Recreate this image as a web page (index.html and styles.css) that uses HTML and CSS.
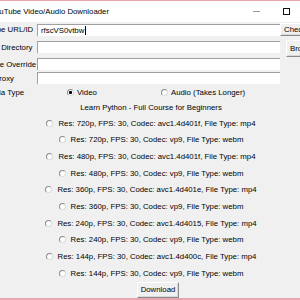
FILE: index.html
```html
<!DOCTYPE html>
<html lang="en">
<head>
  <meta charset="UTF-8">
  <title>YouTube Video/Audio Downloader</title>
  <link rel="stylesheet" href="styles.css">
</head>
<body>

<div class="window">
  <div class="titlebar">
    <span class="title">YouTube Video/Audio Downloader</span>
    <div class="caption-btn"><span class="min-icon"></span></div>
    <div class="caption-btn"><span class="max-icon"></span></div>
    <div class="caption-btn"><span class="close-icon"></span></div>
  </div>

  <div class="form">
    <span class="label">YouTube URL/ID</span>
    <div class="entry">rfscVS0vtbw<span class="caret"></span></div>
    <button class="btn check-btn">Check Video</button>

    <span class="label">Output Directory</span>
    <div class="entry"></div>
    <button class="btn browse-btn">Browse</button>

    <span class="label">Filename Override</span>
    <div class="entry"></div>
    <span></span>

    <span class="label">Proxy</span>
    <div class="entry"></div>
    <span></span>

    <span class="label">Media Type</span>
    <div class="media-options">
      <div class="option video-option"><span class="radio checked"></span>Video</div>
      <div class="option"><span class="radio"></span>Audio (Takes Longer)</div>
    </div>
  </div>

  <div class="video-title">Learn Python - Full Course for Beginners</div>

  <div id="formats" class="formats"></div>

  <div class="actions">
    <button class="btn download-btn">Download</button>
  </div>
</div>

<script>
const streams = [
  { res: '720p', fps: 30, codec: 'avc1.4d401f', type: 'mp4' },
  { res: '720p', fps: 30, codec: 'vp9', type: 'webm', sub: true },
  { res: '480p', fps: 30, codec: 'avc1.4d401f', type: 'mp4' },
  { res: '480p', fps: 30, codec: 'vp9', type: 'webm', sub: true },
  { res: '360p', fps: 30, codec: 'avc1.4d401e', type: 'mp4' },
  { res: '360p', fps: 30, codec: 'vp9', type: 'webm', sub: true },
  { res: '240p', fps: 30, codec: 'avc1.4d4015', type: 'mp4' },
  { res: '240p', fps: 30, codec: 'vp9', type: 'webm', sub: true },
  { res: '144p', fps: 30, codec: 'avc1.4d400c', type: 'mp4' },
  { res: '144p', fps: 30, codec: 'vp9', type: 'webm', sub: true }
];

const formatsDiv = document.getElementById('formats');
streams.forEach(s => {
  const row = document.createElement('div');
  row.className = 'option format-row';
  row.innerHTML = `<span class="radio"></span>Res: ${s.res}, FPS: ${s.fps}, Codec: ${s.codec}, File Type: ${s.type}`;
  formatsDiv.appendChild(row);
});
</script>

</body>
</html>
```

FILE: styles.css
```css
body {
  margin: 0;
  overflow: hidden;
  background: #f0f0f0;
  font-family: "Liberation Sans", Arial, sans-serif;
  font-size: 7.8px;
  color: #000;
}
.window {
  width: 360px;
  height: 300px;
  margin-left: -29px;
  box-sizing: border-box;
  border-top: 1px solid #e9a4ae;
  border-bottom: 2px solid #e9a4ae;
  display: flex;
  flex-direction: column;
}
.titlebar {
  height: 21px;
  flex-shrink: 0;
  background: #fff;
  display: flex;
  align-items: center;
}
.title {
  flex: 1;
  padding-left: 19.5px;
  white-space: nowrap;
}
.caption-btn {
  width: 30px;
  height: 21px;
  display: flex;
  align-items: center;
  justify-content: center;
}
.min-icon {
  width: 7px;
  height: 1px;
  background: #999;
}
.max-icon {
  width: 5px;
  height: 5px;
  border: 1px solid #111;
}
.close-icon {
  width: 7px;
  height: 1px;
  background: #111;
  transform: rotate(45deg);
}
.form {
  display: grid;
  grid-template-columns: 66px 243px 51px;
  grid-template-rows: 15px 20px 14px 14px 15px;
  align-items: center;
}
.label {
  text-align: center;
  white-space: nowrap;
}
.entry {
  height: 12px;
  box-sizing: border-box;
  background: #fff;
  border-top: 1px solid #a0a0a0;
  border-left: 1px solid #a0a0a0;
  padding-left: 3px;
  line-height: 11px;
  display: flex;
  align-items: center;
}
.caret {
  width: 1px;
  height: 9px;
  background: #000;
  margin-left: 1px;
}
.btn {
  font: inherit;
  color: #000;
  background: #f0f0f0;
  border: 1px solid;
  border-color: #fff #8a8a8a #8a8a8a #fff;
  box-shadow: inset -1px -1px 0 #d8d8d8;
  padding: 0 2px;
  white-space: nowrap;
  overflow: hidden;
  text-align: left;
}
.check-btn {
  height: 13px;
  align-self: start;
  margin-top: 1px;
  padding-left: 3px;
}
.browse-btn {
  width: 39px;
  height: 17px;
  justify-self: center;
  margin-top: 2px;
  padding-left: 3px;
}
.media-options {
  grid-column: 2 / 4;
  display: flex;
  padding-left: 30px;
}
.option {
  display: flex;
  align-items: center;
  gap: 3px;
  white-space: nowrap;
}
.video-option {
  width: 94px;
}
.radio {
  width: 7px;
  height: 7px;
  box-sizing: border-box;
  border: 1px solid;
  border-color: #8c8c8c #dcdcdc #dcdcdc #8c8c8c;
  border-radius: 50%;
  background: #fff;
  flex-shrink: 0;
}
.radio.checked {
  background: radial-gradient(circle, #000 0 1.3px, #fff 1.8px);
}
.video-title {
  height: 15px;
  line-height: 15px;
  text-align: center;
}
.formats {
  display: flex;
  flex-direction: column;
  align-items: center;
}
.format-row {
  height: 16.67px;
  gap: 5px;
}
.actions {
  display: flex;
  justify-content: center;
}
.download-btn {
  height: 16px;
  margin-left: 14px;
  padding: 0 3px;
}
```
